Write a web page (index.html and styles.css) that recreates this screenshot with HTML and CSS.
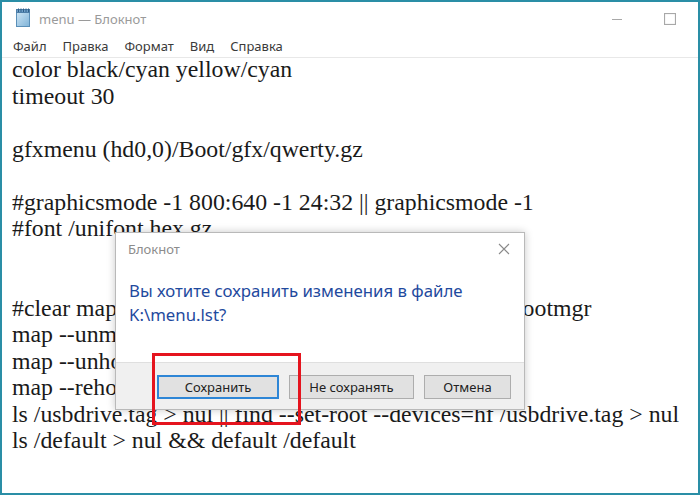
FILE: index.html
```html
<!DOCTYPE html>
<html lang="ru">
<head>
<meta charset="utf-8">
<link rel="stylesheet" href="styles.css">
</head>
<body>
<div class="window">
  <div class="titlebar">
    <svg class="app-icon" width="18" height="20" viewBox="0 0 18 20">
      <defs>
        <linearGradient id="pg" x1="0" y1="0" x2="1" y2="1">
          <stop offset="0" stop-color="#cfe6f5"/>
          <stop offset="1" stop-color="#7fb3d8"/>
        </linearGradient>
      </defs>
      <rect x="2.5" y="3.5" width="13" height="15" fill="url(#pg)" stroke="#5a8fb8"/>
      <rect x="2.5" y="1.5" width="13" height="3" fill="#6f9fc8" stroke="#4d7ea8"/>
      <g stroke="#2f5f88" stroke-width="1">
        <line x1="4.5" y1="0.5" x2="4.5" y2="4"/>
        <line x1="7" y1="0.5" x2="7" y2="4"/>
        <line x1="9.5" y1="0.5" x2="9.5" y2="4"/>
        <line x1="12" y1="0.5" x2="12" y2="4"/>
        <line x1="14.5" y1="0.5" x2="14.5" y2="4"/>
      </g>
    </svg>
    <span class="title">menu — Блокнот</span>
    <span class="spacer"></span>
    <span class="ctl ctl-min"><svg width="12" height="12" viewBox="0 0 12 12"><line x1="1" y1="6.5" x2="11" y2="6.5" stroke="#a8a8a8" stroke-width="1"/></svg></span>
    <span class="ctl ctl-max"><svg width="12" height="12" viewBox="0 0 12 12"><rect x="0.5" y="0.5" width="11" height="11" fill="none" stroke="#a8a8a8" stroke-width="1.2"/></svg></span>
  </div>
  <div class="menubar">
    <span class="menu-item">Файл</span>
    <span class="menu-item">Правка</span>
    <span class="menu-item">Формат</span>
    <span class="menu-item">Вид</span>
    <span class="menu-item">Справка</span>
  </div>
  <div class="editor">
    <div class="line">color black/cyan yellow/cyan</div>
    <div class="line">timeout 30</div>
    <div class="line">&nbsp;</div>
    <div class="line">gfxmenu (hd0,0)/Boot/gfx/qwerty.gz</div>
    <div class="line">&nbsp;</div>
    <div class="line">#graphicsmode -1 800:640 -1 24:32 || graphicsmode -1</div>
    <div class="line">#font /unifont.hex.gz</div>
    <div class="line">&nbsp;</div>
    <div class="line">&nbsp;</div>
    <div class="line">#clear map --mem (hd0,0)/Boot/gfx/qwerty.gz (hd) /bootmgr</div>
    <div class="line">map --unmap=0:0xff</div>
    <div class="line">map --unhook</div>
    <div class="line">map --rehook</div>
    <div class="line">ls /usbdrive.tag &gt; nul || find --set-root --devices=hf /usbdrive.tag &gt; nul</div>
    <div class="line">ls /default &gt; nul &amp;&amp; default /default</div>
  </div>

  <div class="dialog">
    <div class="dlg-head">
      <span class="dlg-title">Блокнот</span>
      <svg class="dlg-close" width="12" height="12" viewBox="0 0 12 12"><path d="M1 1L11 11M11 1L1 11" stroke="#8a8a8a" stroke-width="1.1"/></svg>
    </div>
    <div class="dlg-msg">Вы хотите сохранить изменения в файле<br>K:\menu.lst?</div>
    <div class="dlg-foot">
      <button class="btn btn-default w-save">Сохранить</button>
      <button class="btn w-nosave">Не сохранять</button>
      <button class="btn w-cancel">Отмена</button>
    </div>
  </div>
  <div class="highlight"></div>
</div>
</body>
</html>
```
FILE: styles.css
```css
html, body {
  margin: 0;
  padding: 0;
  background: #ffffff;
}
.window {
  position: relative;
  width: 700px;
  height: 495px;
  box-sizing: border-box;
  border: 2px solid #2a8ea6;
  background: #ffffff;
  overflow: hidden;
  font-family: "Noto Sans", "Open Sans", sans-serif;
}
.titlebar {
  display: flex;
  align-items: center;
  height: 33px;
  padding-left: 12px;
}
.app-icon {
  margin-right: 7px;
  margin-top: -1px;
}
.title {
  font-size: 13px;
  color: #9a9a9a;
}
.spacer { flex: 1; }
.ctl {
  display: flex;
  align-items: center;
  justify-content: center;
  width: 53px;
  height: 30px;
}
.ctl-max { margin-right: 2px; }
.menubar {
  display: flex;
  height: 22px;
  align-items: center;
  padding-left: 11px;
  border-bottom: 1px solid #e8e8e8;
  font-size: 13px;
  color: #3a3a3a;
}
.menu-item {
  margin-right: 16px;
}
.editor {
  font-family: "Liberation Serif", "Times New Roman", serif;
  font-size: 23.8px;
  line-height: 26.5px;
  color: #1a1a1a;
  padding-left: 10px;
  margin-top: -2px;
  white-space: nowrap;
}
.dialog {
  position: absolute;
  left: 113px;
  top: 230px;
  width: 408px;
  height: 176px;
  background: #ffffff;
  border: 1px solid #b9b9b9;
  box-shadow: 0 0 8px rgba(0,0,0,0.22);
  display: flex;
  flex-direction: column;
}
.dlg-head {
  display: flex;
  align-items: center;
  justify-content: space-between;
  height: 32px;
  padding: 0 14px 0 12px;
}
.dlg-title {
  font-size: 13px;
  color: #8c8c8c;
}
.dlg-msg {
  flex: 1;
  padding: 14px 0 0 13px;
  font-size: 16.8px;
  line-height: 24px;
  color: #1f4a9e;
}
.dlg-foot {
  height: 47px;
  box-sizing: border-box;
  background: #f0f0f0;
  border-top: 1px solid #dfdfdf;
  display: flex;
  align-items: flex-start;
  justify-content: flex-end;
  gap: 10px;
  padding: 12px 13px 0 0;
}
.btn {
  height: 24px;
  box-sizing: border-box;
  background: #e1e1e1;
  border: 1px solid #adadad;
  font-family: "Noto Sans", "Open Sans", sans-serif;
  font-size: 13px;
  color: #222;
  padding: 0;
}
.btn-default {
  border: 2px solid #2e86d6;
}
.w-save { width: 122px; }
.w-nosave { width: 125px; }
.w-cancel { width: 87px; }
.highlight {
  position: absolute;
  left: 150px;
  top: 351px;
  width: 149px;
  height: 72px;
  box-sizing: border-box;
  border: 3px solid #e5141e;
}
```
